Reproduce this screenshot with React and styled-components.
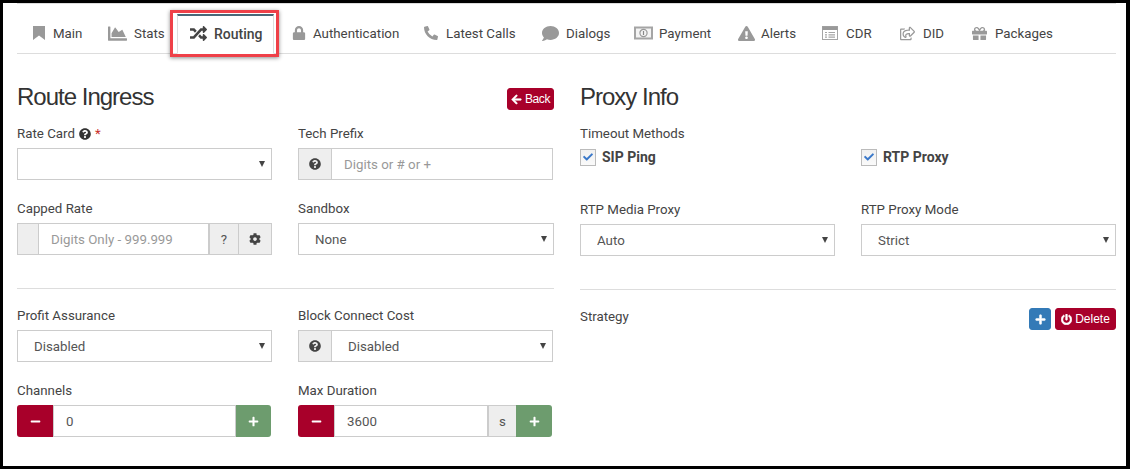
import React from "react";
import styled, { createGlobalStyle } from "styled-components";
import {
  FaChartArea, FaRandom, FaLock, FaPhoneAlt, FaComment,
  FaExclamationTriangle, FaRegShareSquare, FaGift, FaQuestionCircle,
  FaCog, FaPlus, FaMinus, FaCheck, FaPowerOff, FaArrowLeft,
} from "react-icons/fa";

const Global = createGlobalStyle`
  html, body { margin: 0; padding: 0; background: #000; }
  * { box-sizing: border-box; }
  body { font-family: Roboto, "Liberation Sans", sans-serif; font-size: 13.3px; color: #333; }
`;

const Frame = styled.div`
  width: 1130px;
  height: 469px;
  background: #000;
  padding: 3px 4px 3px 3px;
`;
const Sheet = styled.div`
  height: 100%;
  background: #fff;
  padding: 0 10px 0 14px;
`;
const Nav = styled.nav`
  height: 51px;
  display: flex;
  align-items: flex-end;
  border-top: 1px solid #dcdcdc;
  border-bottom: 1px solid #ddd;
  padding-left: 3px;
`;
const Tab = styled.div`
  position: relative;
  flex: 0 0 ${p => p.$w}px;
  height: ${p => (p.$active ? "40px" : "38px")};
  margin-bottom: ${p => (p.$active ? "-1px" : "0")};
  margin-right: ${p => (p.$active ? "5px" : "0")};
  display: flex;
  align-items: center;
  padding: 0 0 2px ${p => (p.$active ? 12 : 13)}px;
  gap: ${p => p.$gap}px;
  font-size: ${p => (p.$active ? "14px" : "13.3px")};
  color: #444;
  white-space: nowrap;
  background: ${p => (p.$active ? "#fff" : "transparent")};
  ${p => p.$active && `
    border: 1px solid #ddd;
    border-top: 2px solid #4a6878;
    border-bottom: 1px solid #fff;
    font-weight: 500;
  `}
  svg { color: ${p => (p.$active ? "#444" : "#999")}; flex: none; }
`;
const Highlight = styled.span`
  position: absolute;
  left: -8px;
  right: -6px;
  top: -6px;
  bottom: -4px;
  border: 3px solid #ef4048;
  box-shadow: 0 1px 4px rgba(0, 0, 0, 0.45);
  pointer-events: none;
`;
const Columns = styled.div`
  display: grid;
  grid-template-columns: 537px 536px;
  column-gap: 26px;
`;
const Column = styled.section`
  display: flex;
  flex-direction: column;
`;
const HeadRow = styled.div`
  height: 71px;
  display: flex;
  align-items: center;
  justify-content: space-between;
  padding-top: 14px;
`;
const Title = styled.h3`
  margin: 0;
  font: 400 24px "Liberation Sans", Arial, sans-serif;
  color: #333;
  letter-spacing: -1px;
`;
const Btn = styled.button`
  height: 22px;
  margin-top: ${p => p.$mt ?? 0}px;
  border: 1px solid ${p => p.$bg};
  border-radius: 3px;
  background: ${p => p.$bg};
  color: #fff;
  padding: 0 3px;
  display: inline-flex;
  align-items: center;
  justify-content: center;
  gap: 3px;
  font: 12px "Liberation Sans", Arial, sans-serif;
  letter-spacing: ${p => p.$ls ?? 0}px;
  width: ${p => p.$w}px;
  svg { stroke: currentColor; stroke-width: 24; }
`;
const FormGrid = styled.div`
  display: grid;
  grid-template-columns: 255px 256px;
  column-gap: 26px;
  row-gap: 20px;
`;
const Field = styled.div`
  display: flex;
  flex-direction: column;
  min-width: 0;
`;
const Label = styled.label`
  height: 23px;
  padding-top: 1px;
  line-height: 16px;
  font-size: 13.3px;
  color: #444;
  display: flex;
  gap: 4px;
  align-items: flex-start;
  svg { margin-top: 2px; color: #333; }
`;
const Req = styled.span`
  color: #c9302c;
`;
const Group = styled.div`
  display: flex;
  height: 32px;
  width: ${p => p.$w ?? 255}px;
`;
const Addon = styled.span`
  flex: 0 0 ${p => p.$w}px;
  display: flex;
  align-items: center;
  justify-content: center;
  background: #eee;
  border: 1px solid #ccc;
  margin-right: -1px;
  color: #555;
  font-size: 13.3px;
  &:last-child { margin-right: 0; }
  svg { color: #444; }
`;
const Input = styled.input`
  flex: 1;
  min-width: 0;
  height: 100%;
  border: 1px solid #ccc;
  border-radius: 0;
  outline: 0;
  padding: 0 ${p => p.$pl ?? 12}px;
  font: 13.3px Roboto, sans-serif;
  color: #555;
  &::placeholder { color: #999; opacity: 1; }
`;
const SelectWrap = styled.div`
  position: relative;
  flex: 1;
  min-width: 0;
  height: 32px;
  &::after {
    content: "";
    position: absolute;
    right: 7px;
    top: 13px;
    border: 3.5px solid transparent;
    border-top: 6px solid #444;
    border-bottom: 0;
  }
`;
const Select = styled.select`
  appearance: none;
  width: 100%;
  height: 100%;
  background: #fff;
  border: 1px solid #ccc;
  border-radius: 0;
  outline: 0;
  padding: 0 16px;
  font: 13.3px Roboto, sans-serif;
  color: #555;
`;
const StepBtn = styled.span`
  flex: 0 0 ${p => p.$w ?? 36}px;
  display: flex;
  align-items: center;
  justify-content: center;
  background: ${p => p.$bg};
  color: #fff;
  border-radius: ${p => p.$r};
`;
const Checks = styled.div`
  display: flex;
  align-items: center;
  height: 18px;
  gap: 6px;
  margin-bottom: 35px;
`;
const Box = styled.span`
  width: 16px;
  height: 17px;
  border: 1px solid #bbb;
  background: linear-gradient(#f0f0f0, #fafafa);
  display: flex;
  align-items: center;
  justify-content: center;
  color: #3a78c9;
`;
const CheckText = styled.span`
  font-weight: 700;
  font-size: 14px;
  color: #444;
`;
const Rule = styled.hr`
  margin: ${p => p.$m};
  border: 0;
  border-top: 1px solid #ddd;
`;
const StrategyRow = styled.div`
  display: flex;
  justify-content: space-between;
  align-items: flex-start;
`;
const ActionGroup = styled.div`
  display: flex;
  gap: 4px;
`;
const StrategyLabel = styled.span`
  font-size: 13.3px;
  color: #444;
  line-height: 16px;
  padding-top: 1px;
`;

const BookmarkIcon = () => (
  <svg width="12" height="14" viewBox="0 0 12 14" fill="currentColor">
    <path d="M0 0h12v14L6 9.5 0 14z" />
  </svg>
);
const MoneyIcon = () => (
  <svg width="19" height="14" viewBox="0 0 19 14">
    <rect width="19" height="13" y="0.5" fill="#a5a5a5" />
    <rect x="2" y="2.5" width="15" height="9" fill="#f4f4f4" />
    <circle cx="9.5" cy="7" r="3.6" fill="none" stroke="#999" strokeWidth="1.2" />
    <path d="M9.5 5v4" stroke="#888" strokeWidth="1.2" />
  </svg>
);
const ListIcon = () => (
  <svg width="16" height="14" viewBox="0 0 16 14">
    <rect x="0.5" y="0.5" width="15" height="13" fill="#fff" stroke="#a5a5a5" />
    <rect x="0.5" y="0.5" width="15" height="3.5" fill="#999" />
    <path d="M3 6.5h2M6.5 6.5H13M3 8.8h2M6.5 8.8H13M3 11.1h2M6.5 11.1H13" stroke="#a5a5a5" strokeWidth="1.2" />
  </svg>
);

const tabs = [
  { name: "Main", Icon: BookmarkIcon, w: 75, gap: 8 },
  { name: "Stats", Icon: FaChartArea, size: 19, w: 82, gap: 7 },
  { name: "Routing", Icon: FaRandom, size: 17, w: 97, gap: 7, active: true },
  { name: "Authentication", Icon: FaLock, size: 14, w: 132, gap: 7 },
  { name: "Latest Calls", Icon: FaPhoneAlt, size: 14, w: 118, gap: 8 },
  { name: "Dialogs", Icon: FaComment, size: 17, w: 92, gap: 7 },
  { name: "Payment", Icon: MoneyIcon, w: 104, gap: 6 },
  { name: "Alerts", Icon: FaExclamationTriangle, size: 17, w: 84, gap: 6 },
  { name: "CDR", Icon: ListIcon, w: 78, gap: 8 },
  { name: "DID", Icon: FaRegShareSquare, size: 15, w: 72, gap: 8 },
  { name: "Packages", Icon: FaGift, size: 15, w: 107, gap: 8 },
];

const Sel = ({ value }) => (
  <SelectWrap>
    <Select defaultValue={value}>
      <option>{value}</option>
    </Select>
  </SelectWrap>
);

const Stepper = ({ value, unit, w }) => (
  <Group $w={w}>
    <StepBtn $bg="#a8002a" $r="3px 0 0 3px"><FaMinus size={11} /></StepBtn>
    <Input $pl={12} defaultValue={value} />
    {unit && <Addon $w={29}>{unit}</Addon>}
    <StepBtn $bg="#6d9c6e" $r="0 3px 3px 0" $w={unit ? 36 : 35}><FaPlus size={11} /></StepBtn>
  </Group>
);

export default function App() {
  return (
    <>
      <Global />
      <Frame>
        <Sheet>
          <Nav>
            {tabs.map(({ name, Icon, size, w, gap, active }) => (
              <Tab key={name} $active={active} $gap={gap} $w={w}>
                <Icon size={size} />
                {name}
                {active && <Highlight />}
              </Tab>
            ))}
          </Nav>
          <Columns>
            <Column>
              <HeadRow>
                <Title>Route Ingress</Title>
                <Btn $bg="#a8002a" $w={47} $ls={-0.4} $mt={5}><FaArrowLeft size={11} />Back</Btn>
              </HeadRow>
              <FormGrid>
                <Field>
                  <Label>Rate Card <FaQuestionCircle size={12} /> <Req>*</Req></Label>
                  <Group><Sel value="" /></Group>
                </Field>
                <Field>
                  <Label>Tech Prefix</Label>
                  <Group>
                    <Addon $w={34}><FaQuestionCircle size={12} /></Addon>
                    <Input placeholder="Digits or # or +" />
                  </Group>
                </Field>
                <Field>
                  <Label>Capped Rate</Label>
                  <Group>
                    <Addon $w={22} />
                    <Input placeholder="Digits Only - 999.999" />
                    <Addon $w={30}>?</Addon>
                    <Addon $w={34}><FaCog size={12} /></Addon>
                  </Group>
                </Field>
                <Field>
                  <Label>Sandbox</Label>
                  <Group $w={256}><Sel value="None" /></Group>
                </Field>
              </FormGrid>
              <Rule $m="33px 0 18px" />
              <FormGrid>
                <Field>
                  <Label>Profit Assurance</Label>
                  <Group><Sel value="Disabled" /></Group>
                </Field>
                <Field>
                  <Label>Block Connect Cost</Label>
                  <Group>
                    <Addon $w={34}><FaQuestionCircle size={12} /></Addon>
                    <Sel value="Disabled" />
                  </Group>
                </Field>
                <Field>
                  <Label>Channels</Label>
                  <Stepper value="0" w={254} />
                </Field>
                <Field>
                  <Label>Max Duration</Label>
                  <Stepper value="3600" unit="s" w={254} />
                </Field>
              </FormGrid>
            </Column>
            <Column>
              <HeadRow>
                <Title>Proxy Info</Title>
              </HeadRow>
              <FormGrid>
                <Field>
                  <Label>Timeout Methods</Label>
                  <Checks><Box><FaCheck size={10} /></Box><CheckText>SIP Ping</CheckText></Checks>
                </Field>
                <Field>
                  <Label />
                  <Checks><Box><FaCheck size={10} /></Box><CheckText>RTP Proxy</CheckText></Checks>
                </Field>
              </FormGrid>
              <FormGrid>
                <Field>
                  <Label>RTP Media Proxy</Label>
                  <Group><Sel value="Auto" /></Group>
                </Field>
                <Field>
                  <Label>RTP Proxy Mode</Label>
                  <Group><Sel value="Strict" /></Group>
                </Field>
              </FormGrid>
              <Rule $m="33px 0 18px" />
              <StrategyRow>
                <StrategyLabel>Strategy</StrategyLabel>
                <ActionGroup>
                  <Btn $bg="#337ab7" $w={22}><FaPlus size={11} /></Btn>
                  <Btn $bg="#a8002a" $w={61}><FaPowerOff size={11} />Delete</Btn>
                </ActionGroup>
              </StrategyRow>
            </Column>
          </Columns>
        </Sheet>
      </Frame>
    </>
  );
}
